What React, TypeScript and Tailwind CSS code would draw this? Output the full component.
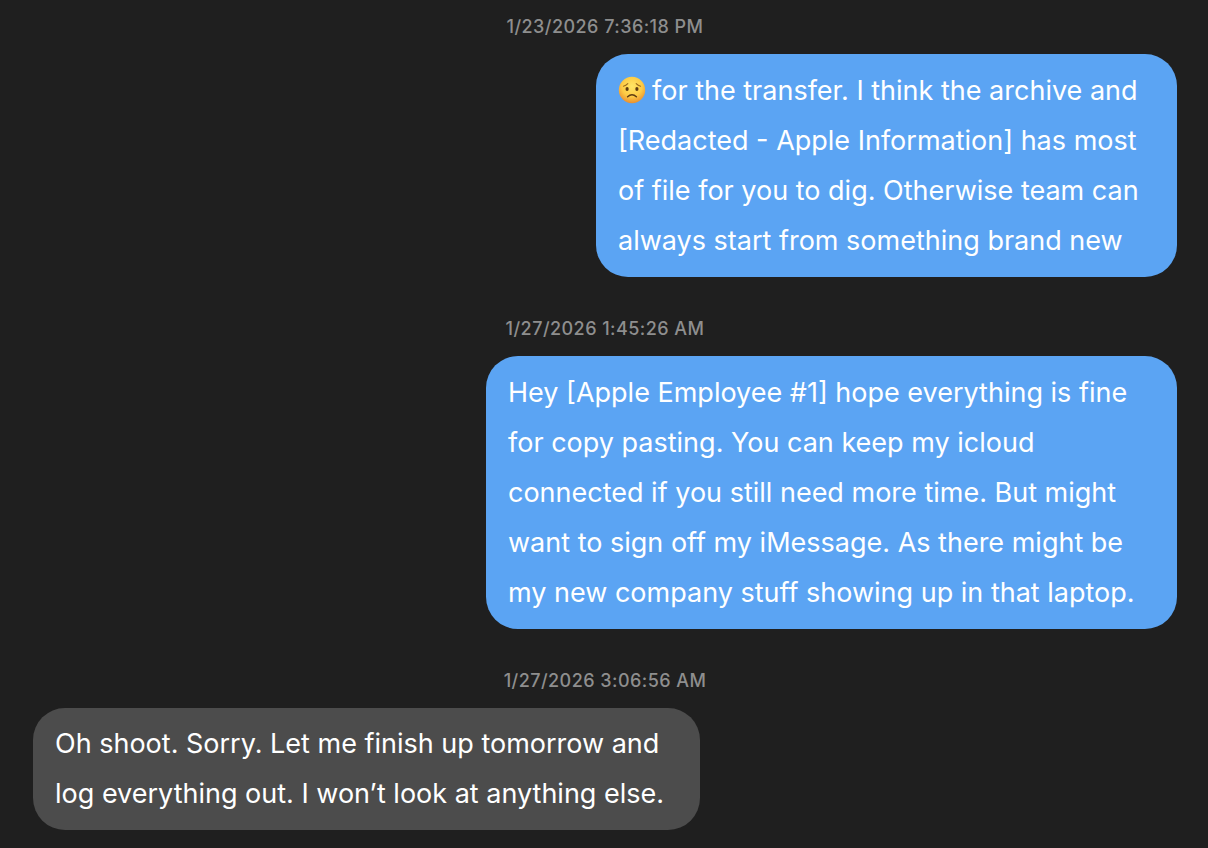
import React from "react";

interface Message {
  id: number;
  time: string;
  lines: string[];
  sent: boolean;
  width: string;
  emoji?: boolean;
}

const messages: Message[] = [
  {
    id: 1,
    time: "1/23/2026 7:36:18 PM",
    sent: true,
    emoji: true,
    width: "w-[581px]",
    lines: [
      "for the transfer. I think the archive and",
      "[Redacted - Apple Information] has most",
      "of file for you to dig. Otherwise team can",
      "always start from something brand new",
    ],
  },
  {
    id: 2,
    time: "1/27/2026 1:45:26 AM",
    sent: true,
    width: "w-[691px]",
    lines: [
      "Hey [Apple Employee #1] hope everything is fine",
      "for copy pasting. You can keep my icloud",
      "connected if you still need more time. But might",
      "want to sign off my iMessage. As there might be",
      "my new company stuff showing up in that laptop.",
    ],
  },
  {
    id: 3,
    time: "1/27/2026 3:06:56 AM",
    sent: false,
    width: "w-[667px]",
    lines: [
      "Oh shoot. Sorry. Let me finish up tomorrow and",
      "log everything out. I won’t look at anything else.",
    ],
  },
];

function WorriedFace() {
  return (
    <svg
      viewBox="0 0 28 28"
      className="mr-1.5 inline-block size-7 align-[-4px]"
      role="img"
      aria-label="Worried face"
    >
      <defs>
        <radialGradient id="face" cx="50%" cy="36%" r="64%">
          <stop offset="0%" stopColor="#ffe566" />
          <stop offset="60%" stopColor="#fdcb45" />
          <stop offset="100%" stopColor="#ea9030" />
        </radialGradient>
      </defs>
      <circle cx="14" cy="14" r="13.2" fill="url(#face)" />
      <ellipse cx="9.1" cy="13" rx="1.6" ry="2" fill="#5e3b12" />
      <ellipse cx="18.9" cy="13" rx="1.6" ry="2" fill="#5e3b12" />
      <path
        d="M5.4 10.2Q8 9.8 9.8 7.7M22.6 10.2Q20 9.8 18.2 7.7"
        fill="none"
        stroke="#9a681c"
        strokeWidth="1.1"
        strokeLinecap="round"
      />
      <path
        d="M9.6 20.8Q14 16.6 18.4 20.8"
        fill="none"
        stroke="#5e3b12"
        strokeWidth="1.5"
        strokeLinecap="round"
      />
    </svg>
  );
}

function MessageRow({ message }: { message: Message }) {
  return (
    <li className="flex flex-col gap-[15px]">
      <time className="text-center text-lg leading-6 font-medium tracking-wide text-[#8e8e8e]">
        {message.time}
      </time>
      <div
        className={`max-w-full rounded-[32px] pl-[22px] text-white ${message.width} ${
          message.sent
            ? "self-end bg-[#5ba4f3] pt-3 pb-[11px]"
            : "self-start bg-[#4c4c4c] py-[11px]"
        }`}
      >
        <p className="text-[27px] leading-[50px]">
          {message.lines.map((line, i) => (
            <span key={line} className="block">
              {i === 0 && message.emoji && <WorriedFace />}
              {line}
            </span>
          ))}
        </p>
      </div>
    </li>
  );
}

export default function App() {
  return (
    <main className="min-h-screen bg-[#1f1f1f] pt-[15px] pr-[31px] pb-4 pl-[33px] font-['Inter',sans-serif]">
      <ul className="flex flex-col gap-10">
        {messages.map((message) => (
          <MessageRow key={message.id} message={message} />
        ))}
      </ul>
    </main>
  );
}
